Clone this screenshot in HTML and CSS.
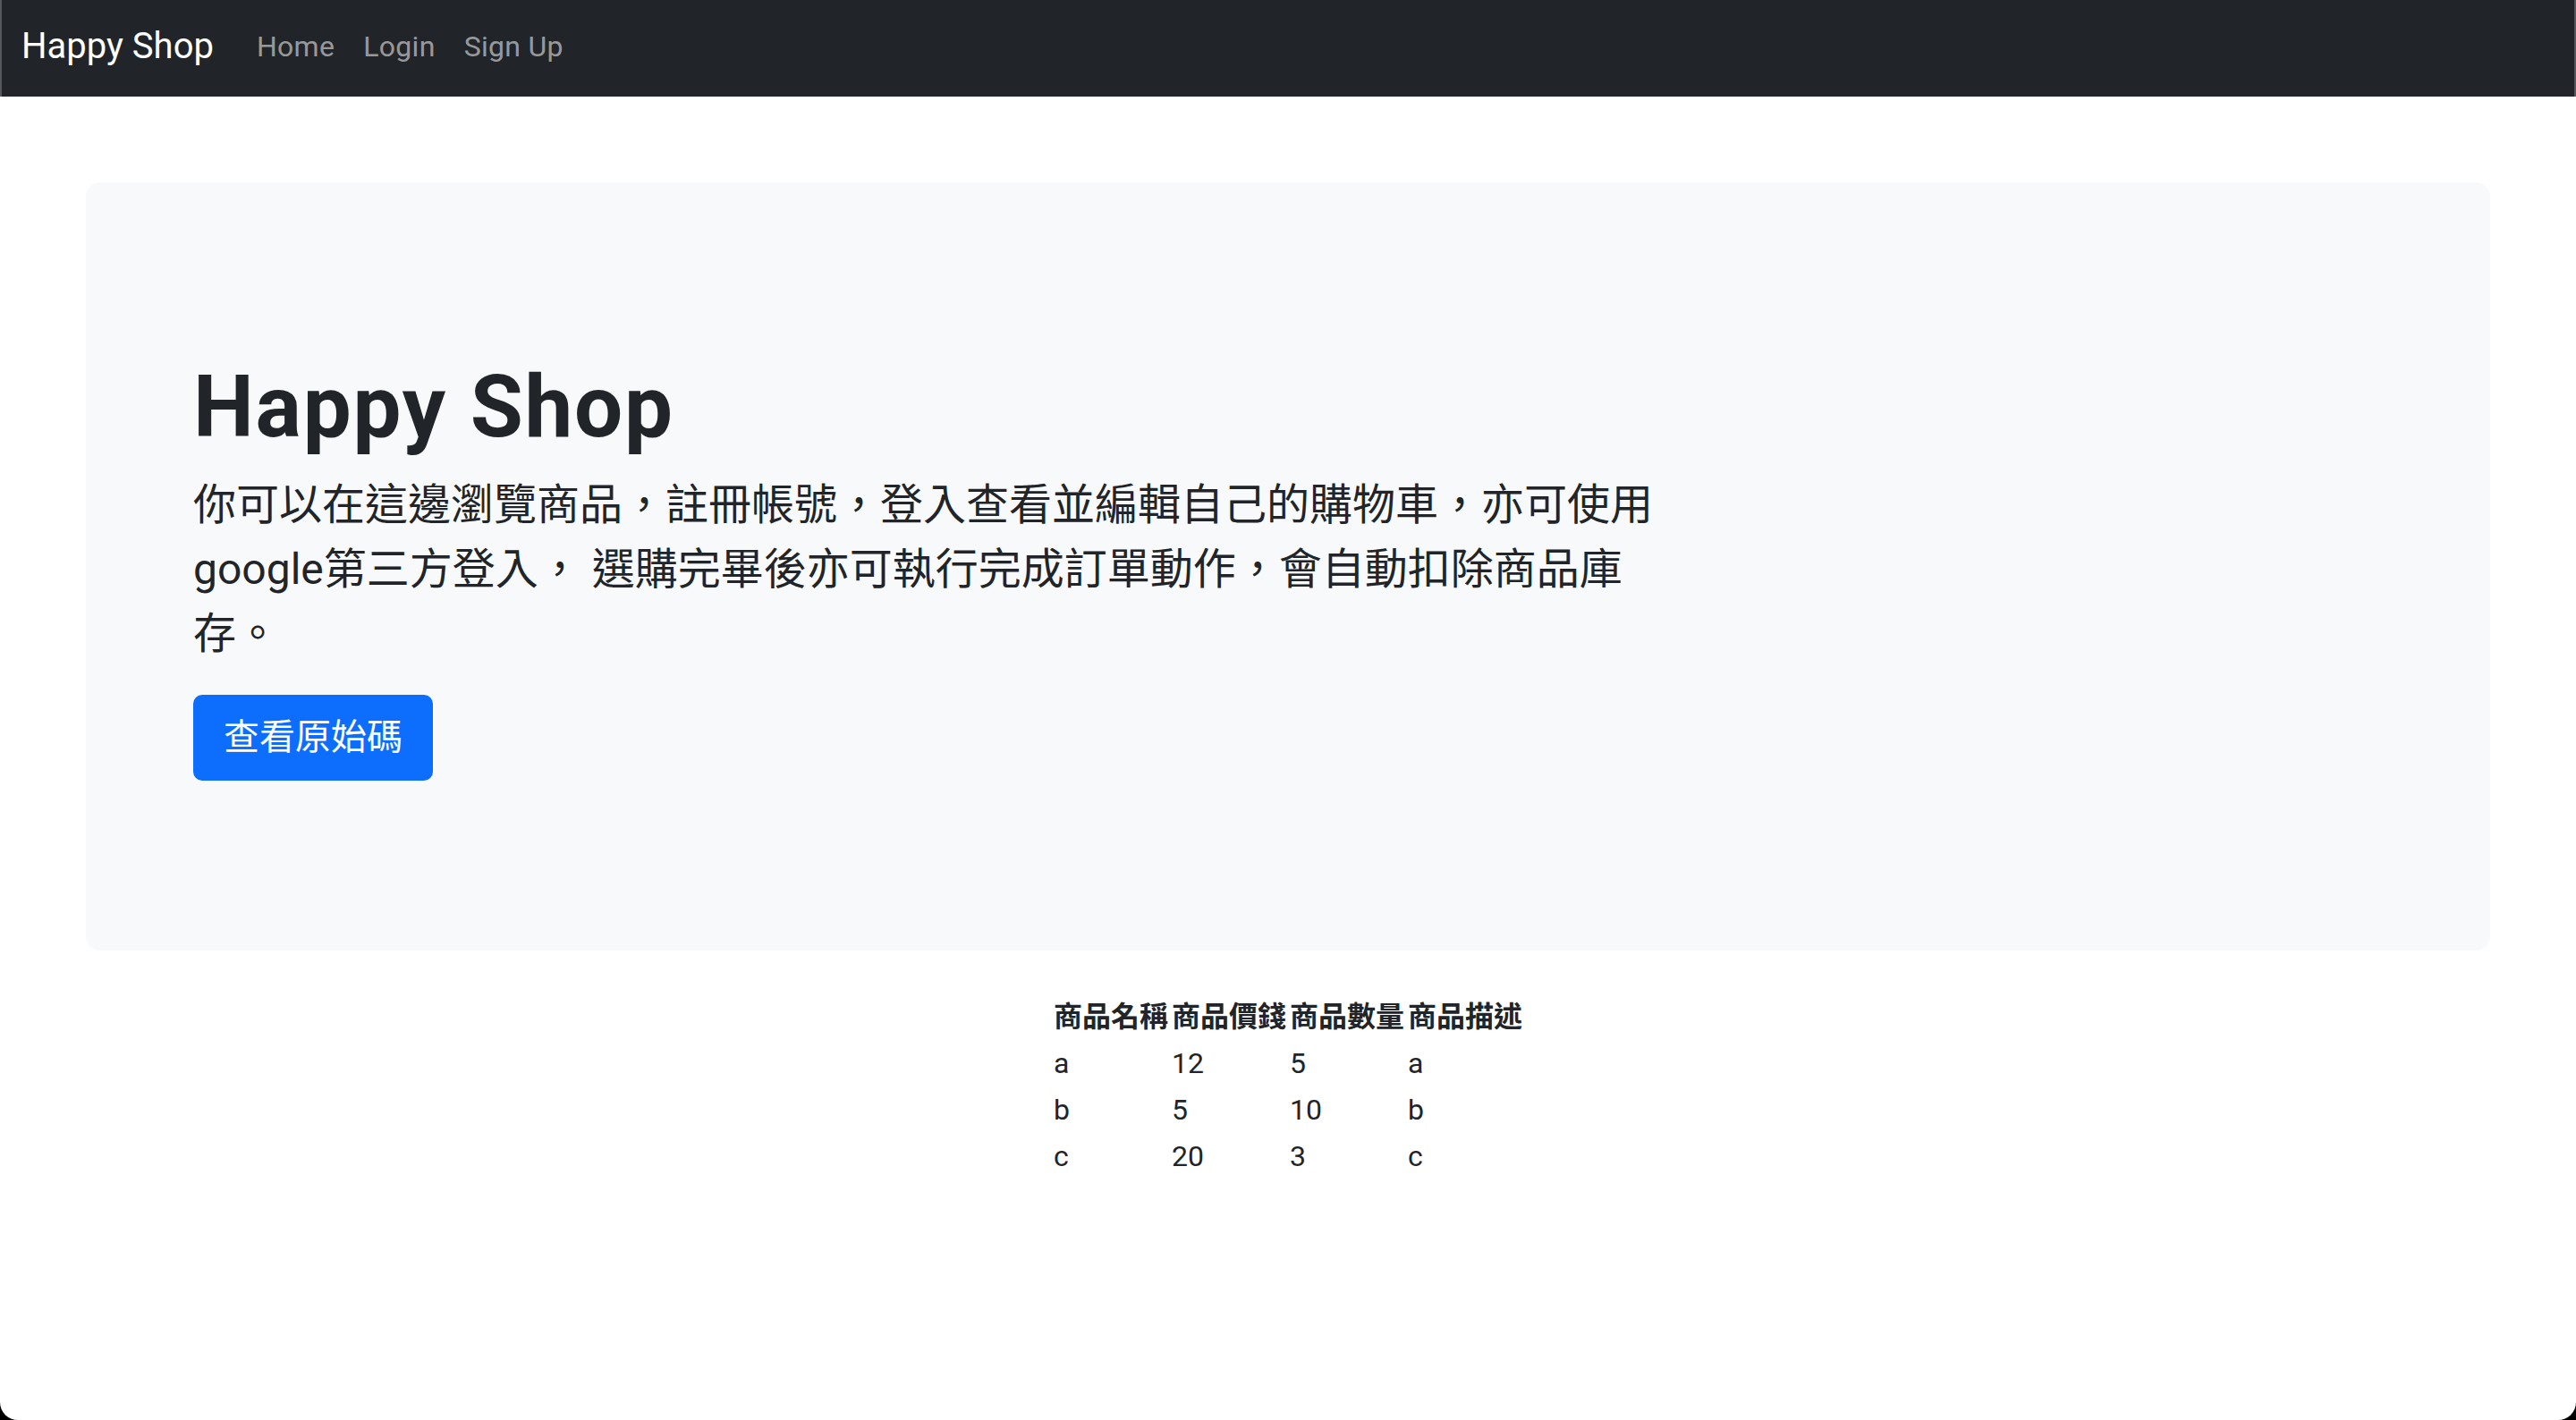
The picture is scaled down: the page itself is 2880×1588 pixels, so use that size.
FILE: index.html
```html
<!DOCTYPE html>
<html lang="zh-Hant">
<head>
<meta charset="utf-8">
<title>Happy Shop</title>
<link rel="stylesheet" href="styles.css">
</head>
<body>
<div class="window">
  <nav class="navbar">
    <a class="brand" href="#">Happy Shop</a>
    <ul class="nav">
      <li><a href="#">Home</a></li>
      <li><a href="#">Login</a></li>
      <li><a href="#">Sign Up</a></li>
    </ul>
  </nav>
  <main>
    <section class="hero">
      <div class="hero-inner">
        <h1 class="hero-title">Happy Shop</h1>
        <p class="lead">你可以在這邊瀏覽商品，註冊帳號，登入查看並編輯自己的購物車，亦可使用google第三方登入， 選購完畢後亦可執行完成訂單動作，會自動扣除商品庫存。</p>
        <a class="btn" href="#">查看原始碼</a>
      </div>
    </section>
    <table class="products">
      <thead>
        <tr><th>商品名稱</th><th>商品價錢</th><th>商品數量</th><th>商品描述</th></tr>
      </thead>
      <tbody>
        <tr><td>a</td><td>12</td><td>5</td><td>a</td></tr>
        <tr><td>b</td><td>5</td><td>10</td><td>b</td></tr>
        <tr><td>c</td><td>20</td><td>3</td><td>c</td></tr>
      </tbody>
    </table>
  </main>
</div>
</body>
</html>
```
FILE: styles.css
```css
html, body {
  margin: 0;
  padding: 0;
  background: #000;
}

body {
  font-family: Roboto, "Noto Sans CJK TC", sans-serif;
  font-size: 32px;
  line-height: 1.5;
  color: #212529;
}

.window {
  background: #fff;
  min-height: 1588px;
  border-radius: 0 0 20px 20px;
  overflow: hidden;
}

.navbar {
  height: 108px;
  box-sizing: border-box;
  background: #212529;
  display: flex;
  align-items: center;
  padding: 0 24px 4px;
  box-shadow: inset 2px 0 #55585c, inset -2px 0 #55585c;
}

.brand {
  font-size: 40px;
  line-height: 60px;
  color: #fff;
  text-decoration: none;
  margin-right: 32px;
}

.nav {
  display: flex;
  list-style: none;
  margin: 0;
  padding: 0;
}

.nav a {
  display: block;
  padding: 16px;
  line-height: 48px;
  color: rgba(255, 255, 255, 0.55);
  text-decoration: none;
  letter-spacing: 0.3px;
}

.hero {
  margin: 96px 96px 48px;
  background: #f8f9fa;
  border-radius: 16px;
  padding: 194px 120px 190px;
}

.hero-inner {
  display: flex;
  flex-direction: column;
  align-items: flex-start;
}

.hero-title {
  font-size: 96px;
  font-weight: 700;
  line-height: 1.2;
  letter-spacing: 1.8px;
  margin: 0 0 16px;
}

.lead {
  font-size: 48px;
  line-height: 1.5;
  width: 1634px;
  margin: 0 0 32px;
}

.btn {
  display: block;
  background: #0d6efd;
  border: 2px solid #0d6efd;
  color: #fff;
  font-size: 40px;
  line-height: 60px;
  padding: 16px 32px;
  border-radius: 10px;
  text-decoration: none;
}

.products {
  margin: 0 auto;
  border-collapse: collapse;
}

.products th,
.products td {
  padding: 2px;
  text-align: left;
  vertical-align: top;
}

.products th {
  font-weight: 700;
}
```
